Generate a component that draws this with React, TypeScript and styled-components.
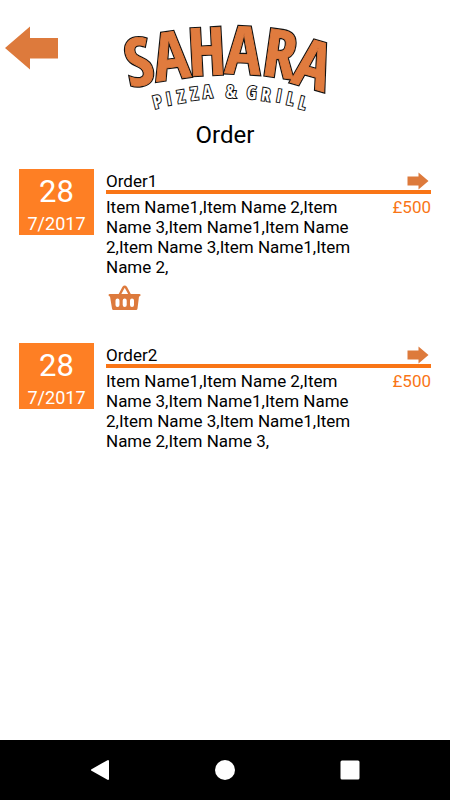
import React from "react";
import styled, { createGlobalStyle } from "styled-components";

const ICON = "#dd7a3c";
const ACCENT = "#fe7f24";

const GlobalStyle = createGlobalStyle`
  *, *::before, *::after { box-sizing: border-box; }
  body {
    margin: 0;
    background: #fff;
    color: #000;
    font-family: Roboto, "Noto Sans", sans-serif;
  }
`;

const Screen = styled.div`
  display: flex;
  flex-direction: column;
  min-height: 100vh;
`;

const Header = styled.header`
  display: grid;
  grid-template-columns: 64px 1fr 64px;
  align-items: start;
  padding-top: 20px;
`;

const IconButton = styled.button`
  display: flex;
  padding: 0;
  border: 0;
  background: none;
  color: inherit;
  cursor: pointer;
`;

const BackButton = styled(IconButton)`
  padding: 6px 4px;
`;

const Logo = styled.svg`
  justify-self: center;
  display: block;
  overflow: visible;
`;

const LogoLetters = styled.g`
  font-family: "Open Sans Condensed", "Open Sans", sans-serif;
  font-weight: 700;
  text-anchor: middle;
  stroke-linejoin: miter;
  stroke-miterlimit: 3;
`;

const NameOutline = styled(LogoLetters)`
  font-size: 66px;
  fill: #111;
  stroke: #111;
  stroke-width: 3;
`;

const NameFace = styled(LogoLetters)`
  font-size: 66px;
  fill: #e07b3e;
  stroke: #e07b3e;
  stroke-width: 0.8;
`;

const Tagline = styled(LogoLetters)`
  font-size: 18px;
  fill: #fff;
  stroke: #111;
  stroke-width: 2;
  paint-order: stroke;
`;

const Title = styled.h1`
  margin: 8px 0 19px;
  font-size: 24px;
  line-height: 30px;
  font-weight: 400;
  text-align: center;
`;

const OrderList = styled.main`
  flex: 1;
  display: flex;
  flex-direction: column;
  gap: 28px;
  padding: 0 19px 24px;
`;

const OrderRow = styled.article`
  display: grid;
  grid-template-columns: 75px 1fr;
  column-gap: 12px;
  align-items: start;
`;

const DateBox = styled.time`
  display: flex;
  flex-direction: column;
  align-items: center;
  height: 66px;
  padding-top: 4px;
  background: ${ACCENT};
  color: #fff;
`;

const Day = styled.span`
  font-size: 31px;
  line-height: 38px;
`;

const Month = styled.span`
  font-size: 18px;
  line-height: 26px;
`;

const OrderHead = styled.div`
  display: flex;
  align-items: flex-end;
  justify-content: space-between;
  height: 25px;
  padding-right: 2px;
  border-bottom: 4px solid #f97516;
`;

const OrderName = styled.h2`
  margin: 0;
  font-size: 17px;
  line-height: 18px;
  font-weight: 400;
`;

const OrderDetails = styled.div`
  display: flex;
  align-items: flex-start;
  justify-content: space-between;
  padding-top: 3px;
`;

const Items = styled.p`
  width: 80%;
  margin: 0;
  font-size: 17px;
  line-height: 20px;
`;

const Price = styled.span`
  color: #f97516;
  font-size: 17px;
  line-height: 20px;
`;

const BasketButton = styled(IconButton)`
  margin: 8px 0 4px 2px;
`;

const NavBar = styled.nav`
  display: grid;
  grid-template-columns: repeat(3, 1fr);
  align-items: center;
  justify-items: center;
  height: 60px;
  padding: 0 38px;
  background: #000;
  color: #fff;
`;

type Glyph = [char: string, x: number, y: number, angle: number];

const NAME: Glyph[] = [
  ["S", 23, 65, -11],
  ["A", 54, 59, -8],
  ["H", 88, 55, -3],
  ["A", 122, 54, 3],
  ["R", 157, 57, 8],
  ["A", 187, 67, 16],
];

const TAGLINE: Glyph[] = [
  ["P", 39, 88, -14],
  ["I", 50, 85, -10],
  ["Z", 62, 83, -9],
  ["Z", 75, 80, -7],
  ["A", 88, 78, -5],
  ["&", 111, 78, 0],
  ["G", 131, 79, 5],
  ["R", 145, 81, 8],
  ["I", 158, 82, 10],
  ["L", 169, 85, 12],
  ["L", 181, 89, 14],
];

function Letters({ glyphs }: { glyphs: Glyph[] }) {
  return (
    <>
      {glyphs.map(([char, x, y, angle], i) => (
        <text key={i} transform={`translate(${x} ${y}) rotate(${angle})`}>
          {char}
        </text>
      ))}
    </>
  );
}

function SaharaLogo() {
  return (
    <Logo width="210" height="92" viewBox="0 0 210 92" role="img" aria-label="Sahara Pizza & Grill">
      <NameOutline aria-hidden="true">
        <Letters glyphs={NAME} />
      </NameOutline>
      <NameFace>
        <Letters glyphs={NAME} />
      </NameFace>
      <Tagline>
        <Letters glyphs={TAGLINE} />
      </Tagline>
    </Logo>
  );
}

function BackArrow() {
  return (
    <svg width="55" height="44" viewBox="0 0 55 44" aria-hidden="true">
      <path d="M1 22 26 0.5V12H54V32.500H26V43.500Z" fill={ICON} />
    </svg>
  );
}

function ForwardArrow() {
  return (
    <svg width="22" height="18" viewBox="0 0 22 18" aria-hidden="true">
      <path d="M0.500 4.500H11.500V0.500L21.500 9 11.500 17.500V13.500H0.500Z" fill={ICON} />
    </svg>
  );
}

function Basket() {
  return (
    <svg width="34" height="26" viewBox="0 0 34 26" aria-hidden="true">
      <path d="M11.500 10 15.500 2.500Q16.700 .8 17.900 2.500L22 10" fill="none" stroke={ICON} strokeWidth="2.400" />
      <path
        fill={ICON}
        fillRule="evenodd"
        d="M1.500 9H31.500Q33 9 32.500 10.500 32 11.500 31 11.500L29.500 23.500Q29.300 25 28 25H5.500Q4.200 25 4 23.500L2 11.500Q1 11.500 .6 10.500.2 9 1.500 9ZM9.500 13.500Q7.500 13.500 7.500 15.500V20Q7.500 22 9.500 22T11.500 20V15.500Q11.500 13.500 9.500 13.500ZM16.700 13.500Q14.700 13.500 14.700 15.500V20Q14.700 22 16.700 22T18.700 20V15.500Q18.700 13.500 16.700 13.500ZM24 13.500Q22 13.500 22 15.500V20Q22 22 24 22T26 20V15.500Q26 13.500 24 13.500Z"
      />
    </svg>
  );
}

interface Order {
  name: string;
  day: string;
  month: string;
  iso: string;
  items: string;
  price: string;
  basket?: boolean;
}

const ORDERS: Order[] = [
  {
    name: "Order1",
    day: "28",
    month: "7/2017",
    iso: "2017-07-28",
    items: "Item Name1,Item Name 2,Item Name 3,Item Name1,Item Name 2,Item Name 3,Item Name1,Item Name 2,",
    price: "£500",
    basket: true,
  },
  {
    name: "Order2",
    day: "28",
    month: "7/2017",
    iso: "2017-07-28",
    items: "Item Name1,Item Name 2,Item Name 3,Item Name1,Item Name 2,Item Name 3,Item Name1,Item Name 2,Item Name 3,",
    price: "£500",
  },
];

export default function App() {
  return (
    <Screen>
      <GlobalStyle />
      <Header>
        <BackButton type="button" aria-label="Go back">
          <BackArrow />
        </BackButton>
        <SaharaLogo />
      </Header>
      <Title>Order</Title>
      <OrderList>
        {ORDERS.map((order) => (
          <OrderRow key={order.name}>
            <DateBox dateTime={order.iso}>
              <Day>{order.day}</Day>
              <Month>{order.month}</Month>
            </DateBox>
            <div>
              <OrderHead>
                <OrderName>{order.name}</OrderName>
                <IconButton type="button" aria-label={`Open ${order.name}`}>
                  <ForwardArrow />
                </IconButton>
              </OrderHead>
              <OrderDetails>
                <Items>{order.items}</Items>
                <Price>{order.price}</Price>
              </OrderDetails>
              {order.basket && (
                <BasketButton type="button" aria-label="Add to basket">
                  <Basket />
                </BasketButton>
              )}
            </div>
          </OrderRow>
        ))}
      </OrderList>
      <NavBar aria-label="System">
        <IconButton type="button" aria-label="Back">
          <svg width="20" height="22" viewBox="0 0 20 22" aria-hidden="true">
            <path d="M2 11 18 2V20Z" fill="currentColor" stroke="currentColor" strokeWidth="2" strokeLinejoin="round" />
          </svg>
        </IconButton>
        <IconButton type="button" aria-label="Home">
          <svg width="20" height="20" viewBox="0 0 20 20" aria-hidden="true">
            <circle cx="10" cy="10" r="10" fill="currentColor" />
          </svg>
        </IconButton>
        <IconButton type="button" aria-label="Recent apps">
          <svg width="20" height="20" viewBox="0 0 20 20" aria-hidden="true">
            <rect x="0.500" y="0.500" width="19" height="19" rx="1.500" fill="currentColor" />
          </svg>
        </IconButton>
      </NavBar>
    </Screen>
  );
}
